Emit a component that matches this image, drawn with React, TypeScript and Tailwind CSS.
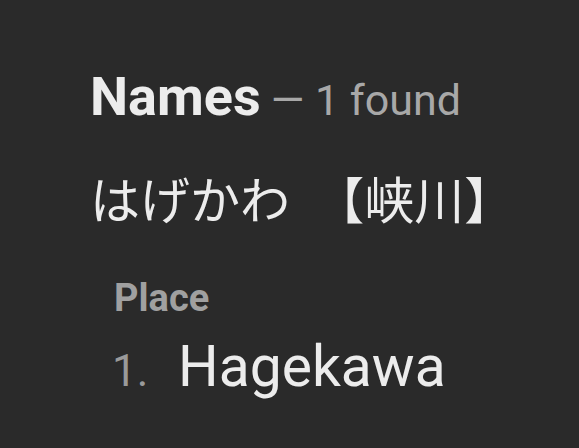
export default function App() {
  return (
    <div className="w-[579px] h-[448px] bg-[#2a2a2a] overflow-hidden pl-[90px] pt-[70px]" style={{ fontFamily: "Roboto, 'Noto Sans CJK JP', sans-serif" }}>
      <div className="flex items-baseline leading-none">
        <span className="text-[54px] font-bold text-[#ececec]">Names</span>
        <span className="text-[43px] text-[#a8a8a8] ml-[10px]">— 1 found</span>
      </div>
      <div className="mt-[48px] text-[50px] leading-none text-[#ececec] [word-spacing:13px]" style={{ fontFamily: "'Noto Sans CJK JP', sans-serif" }}>
        はげかわ 【峡川】
      </div>
      <div className="mt-[57px] ml-[24px] text-[38px] font-bold text-[#a0a0a0] leading-none">Place</div>
      <div className="mt-[21px] ml-[22px] flex items-baseline leading-none">
        <span className="text-[44px] text-[#9a9a9a] w-[66px]">1.</span>
        <span className="text-[57px] text-[#ececec]">Hagekawa</span>
      </div>
    </div>
  );
}
